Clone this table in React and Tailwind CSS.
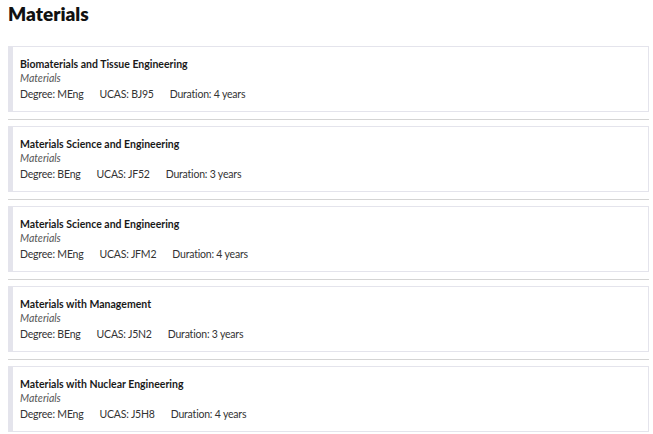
import React from "react";

const courses = [
  { title: "Biomaterials and Tissue Engineering", degree: "MEng", ucas: "BJ95", duration: "4 years" },
  { title: "Materials Science and Engineering", degree: "BEng", ucas: "JF52", duration: "3 years" },
  { title: "Materials Science and Engineering", degree: "MEng", ucas: "JFM2", duration: "4 years" },
  { title: "Materials with Management", degree: "BEng", ucas: "J5N2", duration: "3 years" },
  { title: "Materials with Nuclear Engineering", degree: "MEng", ucas: "J5H8", duration: "4 years" },
];

export default function App() {
  return (
    <div className="w-[653px] h-[434px] bg-white overflow-hidden pl-2 pr-1 font-['Lato',sans-serif]">
      <h1 className="text-[19px] leading-[22px] font-extrabold text-[#111] pt-[3px] m-0">Materials</h1>
      <div className="mt-[21px] flex flex-col">
        {courses.map((c, i) => (
          <div key={i} className="flex flex-col">
            <div className="h-[66px] border border-[#e4e4ec] border-l-[5px] bg-white pl-[7px] pt-[10px]">
              <div className="text-[10.5px] leading-[14px] font-bold text-[#1a1a1a]">{c.title}</div>
              <div className="text-[10.5px] leading-[14px] italic text-[#555]">Materials</div>
              <div className="text-[10.5px] leading-[14px] text-[#333] mt-[2px] flex gap-[16px] tracking-[-0.2px]">
                <span>Degree: {c.degree}</span>
                <span>UCAS: {c.ucas}</span>
                <span>Duration: {c.duration}</span>
              </div>
            </div>
            <div className="h-px bg-[#d4d4d4] mt-[7px] mb-[6px]"></div>
          </div>
        ))}
      </div>
    </div>
  );
}
